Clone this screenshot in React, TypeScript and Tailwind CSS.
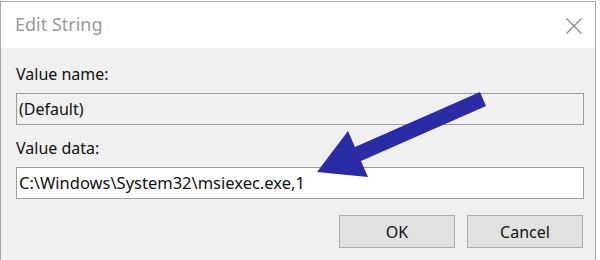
import React from "react";

export default function App() {
  return (
    <div
      className="relative w-[600px] h-[260px] overflow-hidden bg-white pt-[1px]"
      style={{ fontFamily: '"Noto Sans", "Open Sans", sans-serif' }}
    >
      <div className="w-[596px] h-[259px] border-l border-t border-r border-[#a8a8a8] flex flex-col">
        {/* Title bar */}
        <div className="h-[46px] bg-white flex items-center justify-between pl-[14px] pr-[11px] shrink-0">
          <span className="text-[18px] leading-[22px] text-[#9a9a9a] mt-[-2px]">Edit String</span>
          <svg width="18" height="18" viewBox="0 0 18 18" className="mr-[1px] mt-[1px]">
            <path d="M1.5 1.5 L16.5 16.5 M16.5 1.5 L1.5 16.5" stroke="#8c8c8c" strokeWidth="1.4" fill="none" />
          </svg>
        </div>
        {/* Body */}
        <div className="flex-1 bg-[#f0f0f0] pl-[15px] pr-[11px] pt-[16px] flex flex-col text-[16px] leading-[20px] text-[#111]">
          <div>Value name:</div>
          <div className="mt-[9px] h-[32px] border border-[#9c9c9c] bg-[#f0f0f0] pl-[2px] flex items-center">
            (Default)
          </div>
          <div className="mt-[13px]">Value data:</div>
          <div className="mt-[9px] h-[32px] border border-[#9c9c9c] bg-white pl-[2px] flex items-center text-[16.5px]">
            C:\Windows\System32\msiexec.exe,1
          </div>
          <div className="mt-[16px] flex justify-end gap-[12px] pr-[1px]">
            <div className="w-[116px] h-[33px] bg-[#e1e1e1] border border-[#adadad] flex items-center justify-center">
              OK
            </div>
            <div className="w-[116px] h-[33px] bg-[#e1e1e1] border border-[#adadad] flex items-center justify-center">
              Cancel
            </div>
          </div>
        </div>
      </div>
      <svg
        className="absolute left-0 top-0 pointer-events-none"
        width="600"
        height="260"
        viewBox="0 0 600 260"
      >
        <polygon
          points="317,172 348,131 355,147 480,92 486,106 361,161 368,177"
          fill="#2b2ba6"
        />
      </svg>
    </div>
  );
}
